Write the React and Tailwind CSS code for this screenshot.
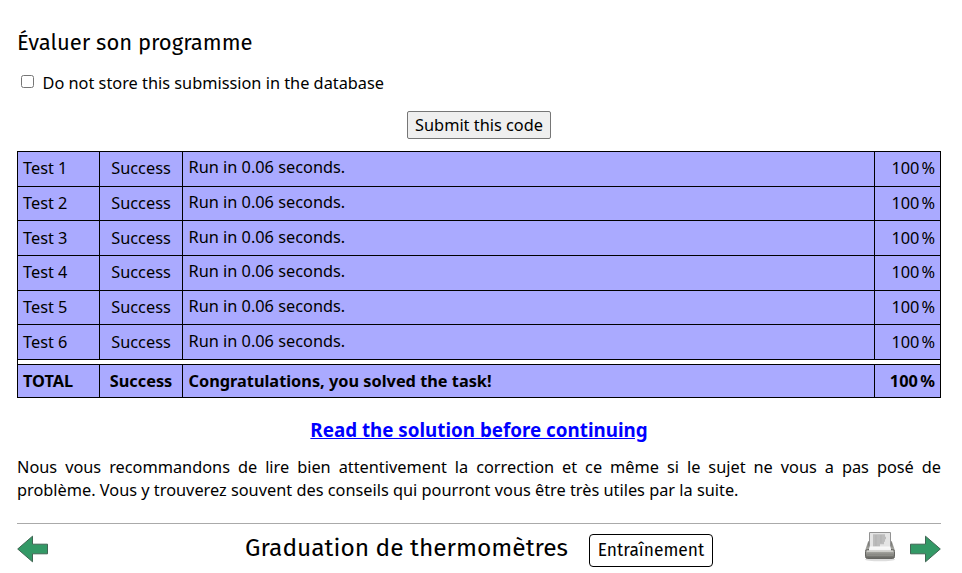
const rows = [
  ['Test 1', 'h-[35px]', true],
  ['Test 2', 'h-[34px]', true],
  ['Test 3', 'h-[35px]', false],
  ['Test 4', 'h-[35px]', true],
  ['Test 5', 'h-[34px]', true],
  ['Test 6', 'h-[35px]', false],
];

function Row({ name, message, height, bold, raised }) {
  const cell = `flex items-center border-r border-black ${raised ? 'pb-[2px]' : ''}`;
  const messageCell = `flex items-center border-r border-black pl-[5.500px] ${bold ? '' : raised ? 'pb-[4px]' : 'pb-[2px]'}`;
  return (
    <div className={`grid grid-cols-[82px_83px_692px_66px] border-b border-black bg-[#aaaaff] leading-[22px] ${height} ${bold ? 'font-bold' : ''}`}>
      <div className={`${cell} pl-[5px]`}>{name}</div>
      <div className={`${cell} justify-center`}>Success</div>
      <div className={messageCell}>{message}</div>
      <div className={`${cell} justify-end pr-[5px]`}>
        <span className="whitespace-nowrap">100<span className={bold ? '-mr-[0.3px]' : '-mr-[0.7px]'}>{'\u202f'}</span>%</span>
      </div>
    </div>
  );
}

function Arrow({ flip }) {
  return (
    <svg width="32" height="28" viewBox="0 0 32 28" className={flip ? '-mr-px -scale-x-100' : '-ml-px'}>
      <path d="M1.700 14 16.500 1.200v8H31.500v9.600H16.500v8Z" fill="#339966" stroke="#3f6653" strokeWidth="1" />
    </svg>
  );
}

function Printer() {
  return (
    <svg width="32" height="32" viewBox="0 0 32 32">
      <defs>
        <linearGradient id="tray" x1="0" y1="0" x2="0" y2="1">
          <stop offset="0" stopColor="#bcbcb8" />
          <stop offset="0.45" stopColor="#94948f" />
          <stop offset="1" stopColor="#62625e" />
        </linearGradient>
        <linearGradient id="back" x1="0" y1="0" x2="0" y2="1">
          <stop offset="0" stopColor="#66665f" />
          <stop offset="1" stopColor="#b5b5b1" />
        </linearGradient>
      </defs>
      <ellipse cx="16" cy="29.500" rx="15" ry="1.700" fill="#ddd" />
      <path d="M4.500 11.500h23l3 9H1.500Z" fill="url(#back)" stroke="#8a8a87" strokeWidth=".6" />
      <path d="M5.500 2.500h21V18h-21Z" fill="#e4e4e4" stroke="#929292" />
      <path d="M9 5.500h12M9 8h13M9 10.500h12M9 13h11M9 15.500h7" stroke="#bcbcbc" strokeWidth="2.300" />
      <path d="M12 5v11M17 5v8" stroke="#b1b1b1" strokeWidth="1" />
      <path d="M5.500 16.500h21l.5 3.500h-22Z" fill="#f8f8f8" />
      <rect x="1.500" y="19.500" width="29" height="9" rx="2" fill="url(#tray)" stroke="#656561" />
      <path d="M5 18.500h22v2H5Z" fill="#f4f4f4" />
      <path d="M3 21.500h26" stroke="#cececa" />
      <path d="M3 25.500h26" stroke="#8d8d88" />
    </svg>
  );
}

export default function App() {
  return (
    <main className="flex h-[573px] w-[962px] flex-col overflow-hidden bg-white pl-[17px] pr-[21px] font-['Noto_Sans',sans-serif] text-[16.320px] text-black">
      <h2 className="mt-[27px] h-8 whitespace-nowrap font-['Fira_Sans','Noto_Sans',sans-serif] text-[22px] leading-8">Évaluer son programme</h2>
      <label className="mt-[13px] flex h-[22px] items-center">
        <input type="checkbox" className="mb-[3px] ml-1 mr-[8.500px] h-[13px] w-[13px]" />
        Do not store this submission in the database
      </label>
      <button className="mt-[17px] h-7 w-[144px] shrink-0 self-center rounded-[2px] border border-[#767676] bg-[#efefef] leading-[26px]">Submit this code</button>
      <section className="mt-3 w-[924px] shrink-0 border-l border-t border-black">
        {rows.map(([name, height, raised]) => (
          <Row key={name} name={name} message="Run in 0.06 seconds." height={height} raised={raised} />
        ))}
        <div className="h-[5px] border-b border-r border-black" />
        <Row name="TOTAL" message="Congratulations, you solved the task!" height="h-[33px]" bold />
      </section>
      <a href="#solution" className="mt-[18px] h-7 self-center whitespace-nowrap text-[18.800px] font-bold leading-7 text-[#0000ff] underline">Read the solution before continuing</a>
      <p className="mt-[12px] h-[46px] text-justify leading-[23px]">
        Nous vous recommandons de lire bien attentivement la correction et ce même si le sujet ne vous a pas posé de problème. Vous y trouverez souvent des conseils qui pourront vous être très utiles par la suite.
      </p>
      <footer className="mt-[21px] flex h-[50px] items-center border-t border-[#aaaaaa] font-['Fira_Sans','Noto_Sans',sans-serif]">
        <Arrow />
        <h1 className="ml-[197px] w-[323px] whitespace-nowrap pb-[2px] text-[24.500px] leading-8">Graduation de thermomètres</h1>
        <span className="ml-[21px] mt-[3px] flex h-[33px] w-[124px] items-center justify-center whitespace-nowrap rounded-[4px] border border-black pt-[2px] text-[17.400px]">Entraînement</span>
        <span className="mb-[5px] ml-auto mr-[14px]"><Printer /></span>
        <Arrow flip />
      </footer>
    </main>
  );
}
